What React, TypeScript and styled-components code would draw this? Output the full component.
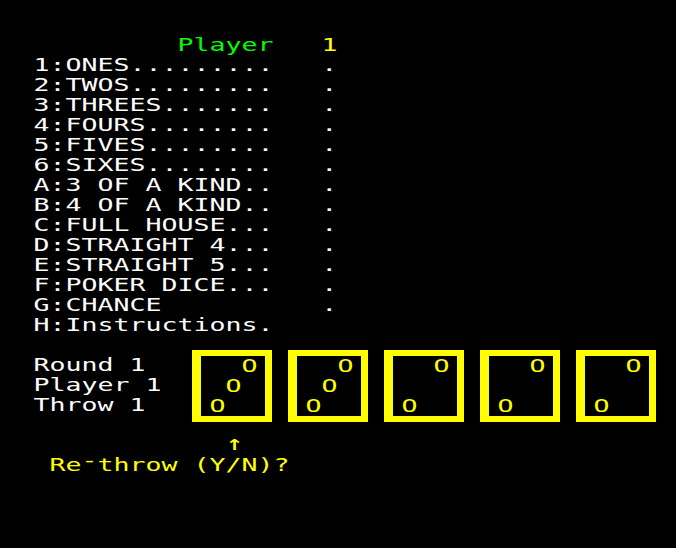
import React from "react";
import styled, { createGlobalStyle } from "styled-components";

const WHITE = "#ffffff";
const GREEN = "#00ff00";
const YELLOW = "#ffff00";

type Tone = "white" | "green" | "yellow";
const toneColor = (t?: Tone) => (t === "green" ? GREEN : t === "yellow" ? YELLOW : WHITE);

const GlobalStyle = createGlobalStyle`
  html, body {
    margin: 0;
    padding: 0;
    background: #000;
  }
`;

const Screen = styled.div`
  width: 676px;
  height: 548px;
  box-sizing: border-box;
  padding: 15px 0 0 16px;
  background: #000;
  overflow: hidden;
  font-family: "DejaVu Sans Mono", "Liberation Mono", monospace;
  font-size: 18.27px;
  color: ${WHITE};
  display: flex;
  flex-direction: column;
`;

const Line = styled.div<{ $tone?: Tone }>`
  height: 20px;
  line-height: 20px;
  padding-left: 1px;
  white-space: pre;
  color: ${(p) => toneColor(p.$tone)};
  transform: scaleX(1.4545);
  transform-origin: 0 50%;
`;

const Ink = styled.span<{ $tone: Tone }>`
  color: ${(p) => toneColor(p.$tone)};
`;

const Raised = styled.span`
  display: inline-block;
  transform: translateY(-5px);
`;

const Arrow = styled.span`
  display: inline-block;
  width: 11px;
  text-align: center;
  font-family: "DejaVu Sans", sans-serif;
  font-size: 15px;
  font-weight: bold;
  vertical-align: top;
  line-height: 20px;
  color: ${YELLOW};
`;

const BottomArea = styled.div`
  display: flex;
  height: 100px;
`;

const InfoColumn = styled.div`
  width: 176px;
  padding-top: 20px;
  flex: none;
`;

const DiceRow = styled.div`
  display: flex;
  gap: 16px;
  align-items: flex-start;
  margin-top: 15px;
`;

const Die = styled.div`
  width: 80px;
  height: 72px;
  box-sizing: border-box;
  border-style: solid;
  border-color: ${YELLOW};
  border-width: 6px 7px 6px 9px;
`;

const PipGrid = styled.div`
  display: grid;
  grid-template-columns: repeat(5, 16px);
  grid-template-rows: repeat(3, 20px);
  margin-left: -9px;
`;

const Pip = styled.span<{ $col: number; $row: number }>`
  grid-column: ${(p) => p.$col + 1};
  grid-row: ${(p) => p.$row + 1};
  display: block;
  line-height: 20px;
  padding-left: 1px;
  color: ${YELLOW};
  transform: scaleX(1.4545);
  transform-origin: 0 50%;
`;

type MenuItem = { key: string; label: string; dots: number; score: boolean };

const menu: MenuItem[] = [
  { key: "1", label: "ONES", dots: 9, score: true },
  { key: "2", label: "TWOS", dots: 9, score: true },
  { key: "3", label: "THREES", dots: 7, score: true },
  { key: "4", label: "FOURS", dots: 8, score: true },
  { key: "5", label: "FIVES", dots: 8, score: true },
  { key: "6", label: "SIXES", dots: 8, score: true },
  { key: "A", label: "3 OF A KIND", dots: 2, score: true },
  { key: "B", label: "4 OF A KIND", dots: 2, score: true },
  { key: "C", label: "FULL HOUSE", dots: 3, score: true },
  { key: "D", label: "STRAIGHT 4", dots: 3, score: true },
  { key: "E", label: "STRAIGHT 5", dots: 3, score: true },
  { key: "F", label: "POKER DICE", dots: 3, score: true },
  { key: "G", label: "CHANCE", dots: 0, score: true },
  { key: "H", label: "Instructions", dots: 1, score: false },
];

const menuLine = (m: MenuItem) => {
  const base = ` ${m.key}:${m.label}${".".repeat(m.dots)}`;
  return m.score ? base.padEnd(19, " ") + "." : base;
};

const pipLayouts: Record<number, [number, number][]> = {
  2: [
    [0, 3],
    [2, 1],
  ],
  3: [
    [0, 3],
    [1, 2],
    [2, 1],
  ],
};

const dice = [3, 3, 2, 2, 2];

export default function App() {
  return (
    <>
      <GlobalStyle />
      <Screen>
        <Line />
        <Line>
          {"          "}
          <Ink $tone="green">Player</Ink>
          {"   "}
          <Ink $tone="yellow">1</Ink>
        </Line>
        {menu.map((m) => (
          <Line key={m.key}>{menuLine(m)}</Line>
        ))}
        <BottomArea>
          <InfoColumn>
            <Line>{" Round 1"}</Line>
            <Line>{" Player 1"}</Line>
            <Line>{" Throw 1"}</Line>
          </InfoColumn>
          <DiceRow>
            {dice.map((v, i) => (
              <Die key={i}>
                <PipGrid>
                  {pipLayouts[v].map(([r, c], j) => (
                    <Pip key={j} $row={r} $col={c}>
                      O
                    </Pip>
                  ))}
                </PipGrid>
              </Die>
            ))}
          </DiceRow>
        </BottomArea>
        <Line>
          {"             "}
          <Arrow>↑</Arrow>
        </Line>
        <Line $tone="yellow">
          {"  Re"}
          <Raised>-</Raised>
          {"throw (Y/N)?"}
        </Line>
      </Screen>
    </>
  );
}
